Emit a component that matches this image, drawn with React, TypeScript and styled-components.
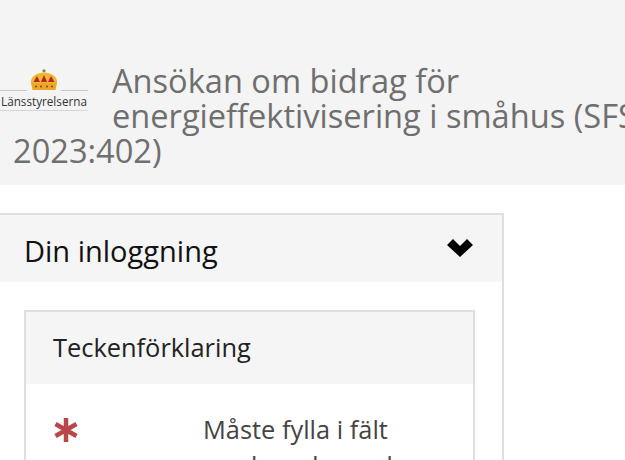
import React from 'react';
import styled, { createGlobalStyle } from 'styled-components';

const GlobalStyle = createGlobalStyle`
  html, body {
    margin: 0;
    padding: 0;
    height: 460px;
    overflow: hidden;
    background: #fff;
    font-family: 'Open Sans', 'Noto Sans', sans-serif;
  }
`;

const Page = styled.div`
  width: 625px;
  height: 460px;
  overflow: hidden;
`;

const Banner = styled.header`
  box-sizing: border-box;
  height: 185px;
  padding-top: 63px;
  background: #f4f4f4;
`;

const Title = styled.h1`
  margin: 0;
  width: 660px;
  padding-left: 13px;
  font-size: 32.6px;
  line-height: 35px;
  font-weight: 400;
  color: #6f6f6f;
`;

const LogoBox = styled.span`
  display: flex;
  flex-direction: column;
  align-items: center;
  float: left;
  width: 88px;
  margin: 6px 24px 0 -13px;
`;

const LogoRow = styled.span`
  display: flex;
  align-items: flex-end;
  width: 100%;
  gap: 3px;
`;

const LogoLine = styled.span`
  flex: 1;
  height: 1px;
  background: #c9c9c9;
`;

const LogoName = styled.span`
  width: 100%;
  padding: 3px 0 2px;
  border-bottom: 1px solid #d5d5d5;
  font-size: 11.7px;
  line-height: 14px;
  text-align: center;
  white-space: nowrap;
  color: #333;
`;

const Content = styled.main`
  padding-top: 28px;
  margin-left: -20px;
`;

const Panel = styled.section`
  box-sizing: border-box;
  width: 524px;
  border: 2px solid #dedede;
`;

const PanelHead = styled.div`
  display: flex;
  align-items: center;
  justify-content: space-between;
  box-sizing: border-box;
  height: 67px;
  padding: 0 29px 3px 42px;
  background: #f5f5f5;
`;

const PanelTitle = styled.h2`
  margin: 0;
  padding-top: 7px;
  font-size: 29px;
  line-height: 36px;
  font-weight: 400;
  color: #111;
`;

const PanelBody = styled.div`
  padding: 28px 27px 0 42px;
`;

const Card = styled.div`
  border: 2px solid #dedede;
`;

const CardHead = styled.div`
  display: flex;
  align-items: center;
  box-sizing: border-box;
  height: 72px;
  padding: 0 27px 3px;
  background: #f5f5f5;
  font-size: 25.4px;
  color: #222;
`;

const Row = styled.div`
  display: grid;
  grid-template-columns: 150px 1fr;
  padding: 27px 27px 0;
  font-size: 25.4px;
  line-height: 36px;
  color: #444;
`;

const Star = styled.svg`
  width: 26px;
  height: 26px;
  margin-top: 6px;
`;

const Chevron = () => (
  <svg width="26" height="19" viewBox="0 0 26 19">
    <path d="M0 7 L6 1 L13 8 L20 1 L26 7 L13 19 Z" fill="#000" />
  </svg>
);

const Crown = () => (
  <svg width="28" height="22" viewBox="0 0 28 22">
    <circle cx="14" cy="1.8" r="1.6" fill="#7a8a3a" />
    <path d="M1 14 C0 7 8 3.5 14 3.5 C20 3.5 28 7 27 14 Z" fill="#f2b72e" />
    <path d="M2.5 21 L1 14 H27 L25.5 21 Z" fill="#eaa924" />
    <path d="M3.5 13 L7 7 L10 13 Z M11 13 L14 6 L17 13 Z M18 13 L21 7 L24.5 13 Z" fill="#b3262e" />
    <circle cx="6" cy="17.5" r="1" fill="#b3262e" />
    <circle cx="11" cy="17.5" r="1" fill="#b3262e" />
    <circle cx="17" cy="17.5" r="1" fill="#b3262e" />
    <circle cx="22" cy="17.5" r="1" fill="#b3262e" />
  </svg>
);

export default function App() {
  return (
    <Page>
      <GlobalStyle />
      <Banner>
        <Title>
          <LogoBox>
            <LogoRow>
              <LogoLine />
              <Crown />
              <LogoLine />
            </LogoRow>
            <LogoName>Länsstyrelserna</LogoName>
          </LogoBox>
          Ansökan om bidrag för energieffektivisering i småhus (SFS 2023:402)
        </Title>
      </Banner>
      <Content>
        <Panel>
          <PanelHead>
            <PanelTitle>Din inloggning</PanelTitle>
            <Chevron />
          </PanelHead>
          <PanelBody>
            <Card>
              <CardHead>Teckenförklaring</CardHead>
              <Row>
                <Star viewBox="0 0 26 26">
                  <path d="M13 1 V25 M2.5 7 L23.5 19 M23.5 7 L2.5 19" stroke="#b9474a" strokeWidth="4.5" />
                </Star>
                <div>
                  Måste fylla i fält
                  <br />
                  markerade med
                </div>
              </Row>
            </Card>
          </PanelBody>
        </Panel>
      </Content>
    </Page>
  );
}
